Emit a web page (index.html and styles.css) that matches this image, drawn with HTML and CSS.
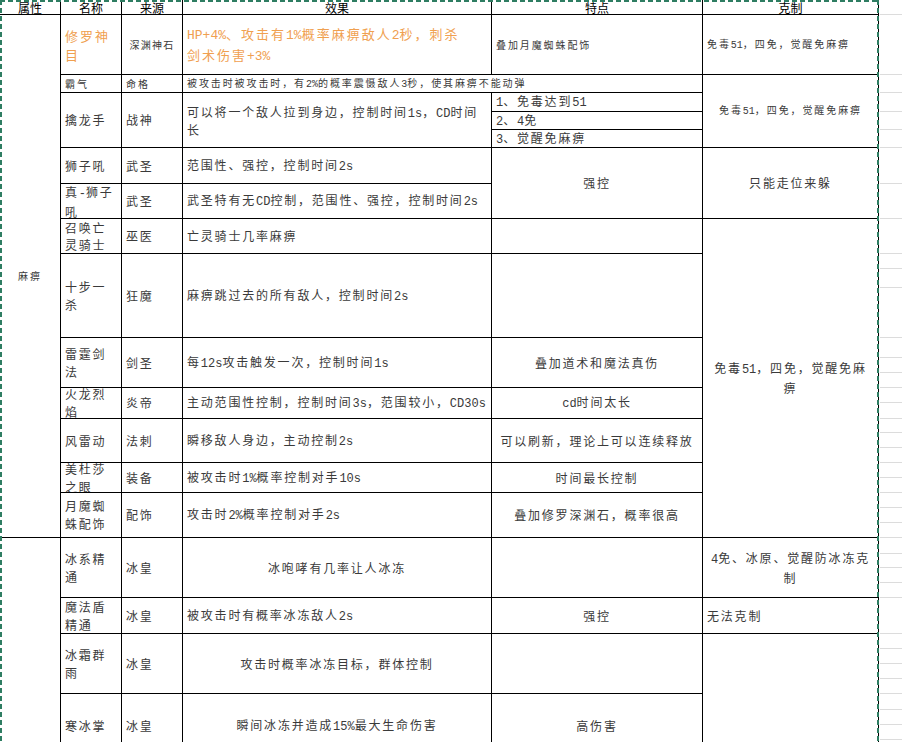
FILE: index.html
```html
<!DOCTYPE html>
<html lang="zh-CN">
<head>
<meta charset="utf-8">
<title>麻痹 控制 表</title>
<link rel="stylesheet" href="styles.css">
</head>
<body>
<div class="page">
  <div class="sheet">
    <div class="c hd">属性</div>
    <div class="c hd">名称</div>
    <div class="c hd">来源</div>
    <div class="c hd">效果</div>
    <div class="c hd">特点</div>
    <div class="c hd">克制</div>

    <div class="c ctr attr rs14">麻痹</div>
    <div class="c or">修罗神<br>目</div>
    <div class="c ctr sm2">深渊神石</div>
    <div class="c or"><span class="t"><span class="en">HP+4%</span>、攻击有<span class="en">1%</span>概率麻痹敌人<span class="en">2</span>秒，刺杀<br>剑术伤害<span class="en">+3%</span></span></div>
    <div class="c sm">叠加月魔蜘蛛配饰</div>
    <div class="c sm"><span class="t">免毒<span class="en">51</span>，四免，觉醒免麻痹</span></div>

    <div class="c sm">霸气</div>
    <div class="c sm">命格</div>
    <div class="c sm cs2"><span class="t">被攻击时被攻击时，有<span class="en">2%</span>的概率震慑敌人<span class="en">3</span>秒，使其麻痹不能动弹</span></div>
    <div class="c sm ctr rs4"><span class="t">免毒<span class="en">51</span>，四免，觉醒免麻痹</span></div>

    <div class="c rs3">擒龙手</div>
    <div class="c rs3">战神</div>
    <div class="c rs3 lh15"><span class="t">可以将一个敌人拉到身边，控制时间<span class="en">1s</span>，<span class="en">CD</span>时间<br>长</span></div>
    <div class="c"><span class="t"><span class="en">1</span>、免毒达到<span class="en">51</span></span></div>
    <div class="c"><span class="t"><span class="en">2</span>、<span class="en">4</span>免</span></div>
    <div class="c"><span class="t"><span class="en">3</span>、觉醒免麻痹</span></div>

    <div class="c">狮子吼</div>
    <div class="c">武圣</div>
    <div class="c"><span class="t">范围性、强控，控制时间<span class="en">2s</span></span></div>
    <div class="c ctr rs2">强控</div>
    <div class="c ctr rs2">只能走位来躲</div>

    <div class="c lh17"><span class="t">真<span class="en">-</span>狮子<br>吼</span></div>
    <div class="c">武圣</div>
    <div class="c"><span class="t">武圣特有无<span class="en">CD</span>控制，范围性、强控，控制时间<span class="en">2s</span></span></div>

    <div class="c lh17">召唤亡<br>灵骑士</div>
    <div class="c">巫医</div>
    <div class="c">亡灵骑士几率麻痹</div>
    <div class="c"></div>
    <div class="c ctr rs7"><span class="t">免毒<span class="en">51</span>，四免，觉醒免麻<br>痹</span></div>

    <div class="c">十步一<br>杀</div>
    <div class="c">狂魔</div>
    <div class="c"><span class="t">麻痹跳过去的所有敌人，控制时间<span class="en">2s</span></span></div>
    <div class="c"></div>

    <div class="c">雷霆剑<br>法</div>
    <div class="c">剑圣</div>
    <div class="c"><span class="t">每<span class="en">12s</span>攻击触发一次，控制时间<span class="en">1s</span></span></div>
    <div class="c ctr">叠加道术和魔法真伤</div>

    <div class="c">火龙烈<br>焰</div>
    <div class="c">炎帝</div>
    <div class="c"><span class="t">主动范围性控制，控制时间<span class="en">3s</span>，范围较小，<span class="en">CD30s</span></span></div>
    <div class="c ctr"><span class="t"><span class="en">cd</span>时间太长</span></div>

    <div class="c">风雷动</div>
    <div class="c">法刺</div>
    <div class="c"><span class="t">瞬移敌人身边，主动控制<span class="en">2s</span></span></div>
    <div class="c ctr">可以刷新，理论上可以连续释放</div>

    <div class="c">美杜莎<br>之眼</div>
    <div class="c">装备</div>
    <div class="c"><span class="t">被攻击时<span class="en">1%</span>概率控制对手<span class="en">10s</span></span></div>
    <div class="c ctr">时间最长控制</div>

    <div class="c">月魔蜘<br>蛛配饰</div>
    <div class="c">配饰</div>
    <div class="c"><span class="t">攻击时<span class="en">2%</span>概率控制对手<span class="en">2s</span></span></div>
    <div class="c ctr">叠加修罗深渊石，概率很高</div>

    <div class="c rs4"></div>
    <div class="c">冰系精<br>通</div>
    <div class="c">冰皇</div>
    <div class="c ctr">冰咆哮有几率让人冰冻</div>
    <div class="c"></div>
    <div class="c ctr"><span class="t"><span class="en">4</span>免、冰原、觉醒防冰冻克<br>制</span></div>

    <div class="c">魔法盾<br>精通</div>
    <div class="c">冰皇</div>
    <div class="c"><span class="t">被攻击时有概率冰冻敌人<span class="en">2s</span></span></div>
    <div class="c ctr">强控</div>
    <div class="c">无法克制</div>

    <div class="c">冰霜群<br>雨</div>
    <div class="c">冰皇</div>
    <div class="c ctr">攻击时概率冰冻目标，群体控制</div>
    <div class="c"></div>
    <div class="c rs2"></div>

    <div class="c">寒冰掌</div>
    <div class="c">冰皇</div>
    <div class="c ctr"><span class="t">瞬间冰冻并造成<span class="en">15%</span>最大生命伤害</span></div>
    <div class="c ctr">高伤害</div>
  </div>
  <div class="gutter">
    <div></div><div></div><div></div><div></div><div></div><div></div><div></div><div></div><div></div><div></div>
    <div></div><div></div><div></div><div></div><div></div><div></div><div></div><div></div><div></div><div></div>
    <div></div><div></div><div></div><div></div><div></div><div></div><div></div><div></div><div></div><div></div>
    <div></div><div></div><div></div><div></div><div></div><div></div><div></div>
  </div>
</div>
</body>
</html>
```

FILE: styles.css
```css
html, body {
  margin: 0;
  padding: 0;
  background: #fff;
  overflow: hidden;
}

body {
  font-family: "Noto Sans CJK SC", "Noto Sans", sans-serif;
}

.page {
  display: flex;
  width: 902px;
  height: 742px;
  overflow: hidden;
}

.sheet {
  position: relative;
  flex: none;
  display: grid;
  grid-template-columns: 61px 61px 61px 309px 211px 176px;
  grid-template-rows: 15px 60px 18px 19px 18px 18px 36px 35px 35px 84px 50px 31px 44px 30px 45px 60px 36px 60px 64px;
}

.sheet::after {
  content: "";
  position: absolute;
  inset: 0;
  pointer-events: none;
  background:
    repeating-linear-gradient(90deg, #2e7d62 0 5px, transparent 5px 8px) left top / 100% 2px no-repeat,
    repeating-linear-gradient(180deg, #2e7d62 0 5px, transparent 5px 8px) left top / 2px 100% no-repeat,
    repeating-linear-gradient(180deg, #2e7d62 0 5px, transparent 5px 8px) right top / 2px 100% no-repeat;
}

.c {
  box-sizing: border-box;
  border-right: 1px solid #000;
  border-bottom: 1px solid #000;
  display: flex;
  align-items: center;
  padding: 0 4px;
  overflow: hidden;
  white-space: nowrap;
  min-width: 0;
  min-height: 0;
  font-size: 12px;
  line-height: 18px;
  letter-spacing: 1.8px;
  color: #3a3a3a;
}

.t {
  display: block;
}

.en {
  font-family: "Liberation Mono", monospace;
  letter-spacing: 0;
}

.hd {
  justify-content: center;
  align-items: flex-end;
  padding: 0;
  color: #000;
  letter-spacing: 0;
  line-height: 13px;
}

.ctr {
  justify-content: center;
  text-align: center;
}

.sm {
  font-size: 10px;
  letter-spacing: 1.9px;
}

.sm2 {
  font-size: 10px;
  letter-spacing: 1.3px;
}

.attr {
  font-size: 10px;
  letter-spacing: 2px;
}

.or {
  color: #f0a050;
  font-size: 13px;
  letter-spacing: 2px;
  line-height: 19px;
}

.lh15 {
  line-height: 15px;
}

.lh17 {
  line-height: 17px;
}

.rs2 { grid-row: span 2; }
.rs3 { grid-row: span 3; }
.rs4 { grid-row: span 4; }
.rs7 { grid-row: span 7; }
.rs14 { grid-row: span 14; }
.cs2 { grid-column: span 2; }

.gutter {
  flex: 1;
  display: grid;
  align-content: start;
  padding-left: 1px;
  grid-template-rows: 15px 60px 18px 19px 18px 18px 36px 35px 35px 15px 19px 50px 20px 15px 15px 15px 16px 14px 15px 15px 15px 15px 15px 15px 15px 16px 14px 15px 15px 36px 15px 15px 15px 15px 16px 15px 15px;
}

.gutter > div {
  box-sizing: border-box;
  border-bottom: 1px solid #dcdcdc;
}
```
